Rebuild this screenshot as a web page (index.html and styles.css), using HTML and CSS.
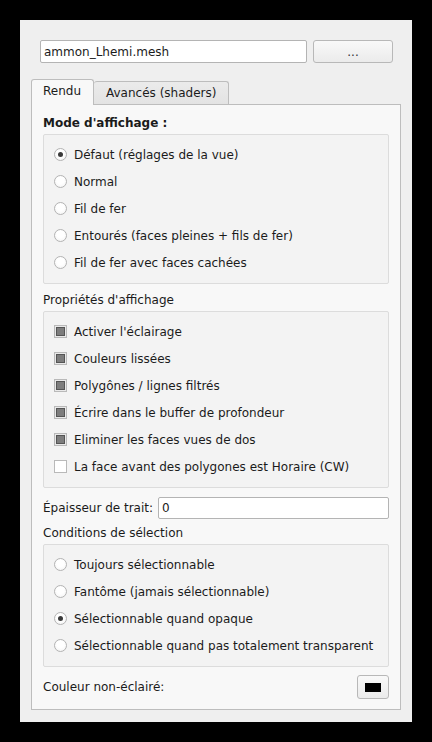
FILE: index.html
```html
<!DOCTYPE html>
<html lang="fr">
<head>
<meta charset="utf-8">
<link rel="stylesheet" href="styles.css">
</head>
<body>
<div class="window">
  <div class="file-row">
    <div class="line-edit file-edit">ammon_Lhemi.mesh</div>
    <div class="push-btn browse">...</div>
  </div>
  <div class="tabs">
    <div class="tab active">Rendu</div>
    <div class="tab">Avancés (shaders)</div>
  </div>
  <div class="pane">
    <div class="section-label bold first">Mode d'affichage :</div>
    <div class="group">
      <div class="row"><span class="radio checked"></span><span>Défaut (réglages de la vue)</span></div>
      <div class="row"><span class="radio"></span><span>Normal</span></div>
      <div class="row"><span class="radio"></span><span>Fil de fer</span></div>
      <div class="row"><span class="radio"></span><span>Entourés (faces pleines + fils de fer)</span></div>
      <div class="row"><span class="radio"></span><span>Fil de fer avec faces cachées</span></div>
    </div>
    <div class="section-label">Propriétés d'affichage</div>
    <div class="group">
      <div class="row"><span class="check checked"></span><span>Activer l'éclairage</span></div>
      <div class="row"><span class="check checked"></span><span>Couleurs lissées</span></div>
      <div class="row"><span class="check checked"></span><span>Polygônes / lignes filtrés</span></div>
      <div class="row"><span class="check checked"></span><span>Écrire dans le buffer de profondeur</span></div>
      <div class="row"><span class="check checked"></span><span>Eliminer les faces vues de dos</span></div>
      <div class="row"><span class="check"></span><span>La face avant des polygones est Horaire (CW)</span></div>
    </div>
    <div class="field-row">
      <span class="field-label">Épaisseur de trait:</span>
      <div class="line-edit width-edit">0</div>
    </div>
    <div class="section-label tight">Conditions de sélection</div>
    <div class="group">
      <div class="row"><span class="radio"></span><span>Toujours sélectionnable</span></div>
      <div class="row"><span class="radio"></span><span>Fantôme (jamais sélectionnable)</span></div>
      <div class="row"><span class="radio checked"></span><span>Sélectionnable quand opaque</span></div>
      <div class="row"><span class="radio"></span><span>Sélectionnable quand pas totalement transparent</span></div>
    </div>
    <div class="color-row">
      <span class="field-label">Couleur non-éclairé:</span>
      <div class="push-btn color-btn"><span class="swatch"></span></div>
    </div>
  </div>
</div>
</body>
</html>
```

FILE: styles.css
```css
html, body {
  margin: 0;
  padding: 0;
  background: #000;
}
body {
  font-family: "DejaVu Sans", sans-serif;
  font-size: 12px;
  color: #1b1b1b;
}
.window {
  margin: 20px 0 0 20px;
  width: 392px;
  height: 702px;
  background: #efefef;
  box-sizing: border-box;
  padding-top: 20px;
}
.file-row {
  display: flex;
  gap: 6px;
  padding-left: 20px;
  height: 23px;
}
.line-edit {
  box-sizing: border-box;
  background: #fff;
  border: 1px solid #b4b4b4;
  border-radius: 2px;
  padding-left: 3px;
  display: flex;
  align-items: center;
  line-height: 14px;
  font-size: 12px;
}
.file-edit {
  width: 267px;
  height: 23px;
}
.push-btn {
  box-sizing: border-box;
  border: 1px solid #b8b8b8;
  border-radius: 3px;
  background: linear-gradient(#f9f9f9, #ebebeb);
  display: flex;
  align-items: center;
  justify-content: center;
}
.browse {
  width: 80px;
  height: 23px;
  font-size: 12px;
  line-height: 12px;
  color: #333;
}
.tabs {
  display: flex;
  margin-top: 16px;
  padding-left: 11px;
  height: 25px;
  align-items: flex-end;
  position: relative;
  z-index: 1;
}
.tab {
  box-sizing: border-box;
  border: 1px solid #bdbdbd;
  border-bottom: none;
  border-radius: 3px 3px 0 0;
  font-size: 12px;
  line-height: 20px;
  height: 23px;
  padding: 1px 12px 0;
  background: linear-gradient(#ebebeb, #e3e3e3);
  color: #1b1b1b;
  white-space: nowrap;
}
.tab.active {
  background: #f8f8f8;
  padding: 1px 12px 0 11px;
  margin-bottom: -1px;
  height: 26px;
}
.tab + .tab {
  border-left: none;
}
.pane {
  box-sizing: border-box;
  margin-left: 11px;
  width: 370px;
  height: 606px;
  border: 1px solid #bdbdbd;
  background: #f8f8f8;
  padding: 0 11px 0 11px;
  font-size: 12px;
}
.section-label {
  line-height: 18px;
  margin: 7px 0 2px;
  white-space: nowrap;
}
.section-label.first {
  margin: 9px 0 2px;
}
.section-label.tight {
  margin-top: 5px;
}
.bold {
  font-weight: bold;
}
.group {
  box-sizing: border-box;
  border: 1px solid #dcdcdc;
  border-radius: 2px;
  background: #f3f3f3;
  padding: 6px 10px 7px;
}
.row {
  height: 27px;
  display: flex;
  align-items: center;
  gap: 7px;
  white-space: nowrap;
}
.radio {
  box-sizing: border-box;
  width: 13px;
  height: 13px;
  border-radius: 50%;
  border: 1px solid #b3b3b3;
  background: radial-gradient(circle at 50% 40%, #ffffff 40%, #f0f0f0 100%);
  display: flex;
  align-items: center;
  justify-content: center;
  flex: none;
}
.radio.checked::after {
  content: "";
  width: 5px;
  height: 5px;
  border-radius: 50%;
  background: #3a3a3a;
}
.check {
  box-sizing: border-box;
  width: 13px;
  height: 13px;
  border: 1px solid #b9b9b9;
  background: #fff;
  display: flex;
  align-items: center;
  justify-content: center;
  flex: none;
}
.check.checked {
  background: #e9e9e9;
}
.check.checked::after {
  content: "";
  box-sizing: border-box;
  width: 9px;
  height: 9px;
  border: 1px solid #555;
  background: #7d7d7d;
}
.field-row {
  display: flex;
  align-items: center;
  gap: 5px;
  margin-top: 9px;
  height: 22px;
  white-space: nowrap;
}
.width-edit {
  flex: 1;
  height: 22px;
}
.color-row {
  display: flex;
  align-items: center;
  justify-content: space-between;
  margin-top: 8px;
  height: 24px;
}
.color-btn {
  width: 32px;
  height: 24px;
}
.swatch {
  width: 16px;
  height: 9px;
  background: #000;
}
```
